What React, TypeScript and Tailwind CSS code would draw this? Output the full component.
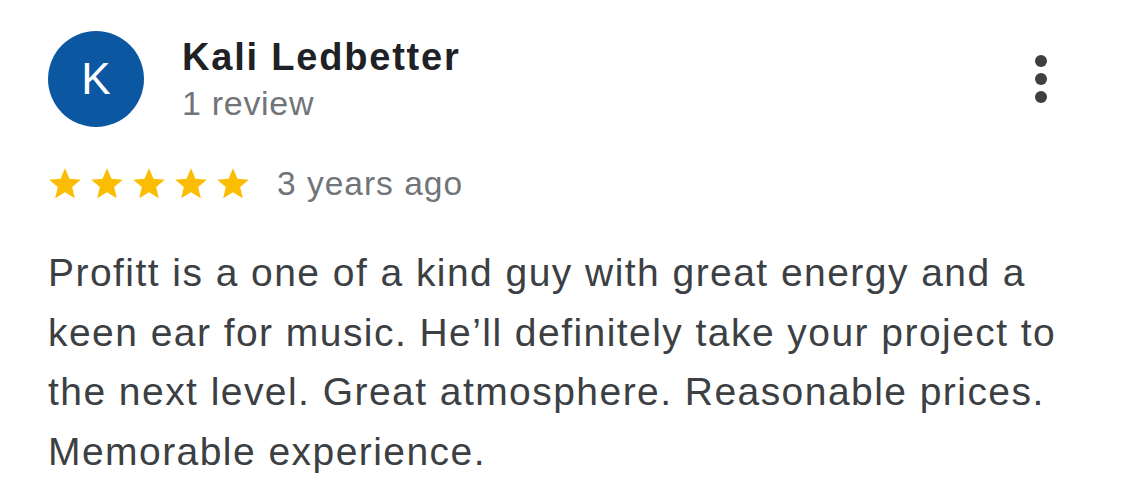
import React from "react";

const Star = () => (
  <svg width="38" height="38" viewBox="0 0 24 24" className="shrink-0">
    <path
      d="M12 17.27L18.18 21l-1.64-7.03L22 9.24l-7.19-.61L12 2 9.19 8.63 2 9.24l5.46 4.73L5.82 21z"
      fill="#fbbc04"
    />
  </svg>
);

export default function App() {
  return (
    <div
      className="w-[1125px] h-[483px] bg-white overflow-hidden pl-[48px] pr-[12px] pt-[31px]"
      style={{ fontFamily: '"Liberation Sans", Arial, sans-serif' }}
    >
      <div className="flex items-start h-[96px]">
        <div className="w-[96px] h-[96px] rounded-full bg-[#0b57a2] flex items-center justify-center shrink-0">
          <span className="text-white text-[44px] leading-none font-normal">K</span>
        </div>
        <div className="ml-[38px] flex flex-col flex-1">
          <div className="text-[38px] leading-[44px] font-bold text-[#202124] tracking-[1.8px] mt-[4px]">
            Kali Ledbetter
          </div>
          <div className="text-[34px] leading-[44px] text-[#70757a] tracking-[0.7px] mt-[2px]">1 review</div>
        </div>
        <div className="flex flex-col items-center gap-[6px] mt-[24px] mr-[66px]">
          <span className="w-[12px] h-[12px] rounded-full bg-[#3c4043]" />
          <span className="w-[12px] h-[12px] rounded-full bg-[#3c4043]" />
          <span className="w-[12px] h-[12px] rounded-full bg-[#3c4043]" />
        </div>
      </div>
      <div className="flex items-center h-[40px] mt-[37px] ml-[-2px]">
        <div className="flex gap-[4px]">
          <Star />
          <Star />
          <Star />
          <Star />
          <Star />
        </div>
        <span className="ml-[25px] text-[33.5px] leading-[40px] text-[#70757a] tracking-[1px]">3 years ago</span>
      </div>
      <p className="mt-[39px] text-[39px] leading-[59.5px] text-[#3c4043] tracking-[1.45px] w-[1065px]">
        Profitt is a one of a kind guy with great energy and a keen ear for music. He’ll definitely take your project to
        the next level. Great atmosphere. Reasonable prices. Memorable experience.
      </p>
    </div>
  );
}
